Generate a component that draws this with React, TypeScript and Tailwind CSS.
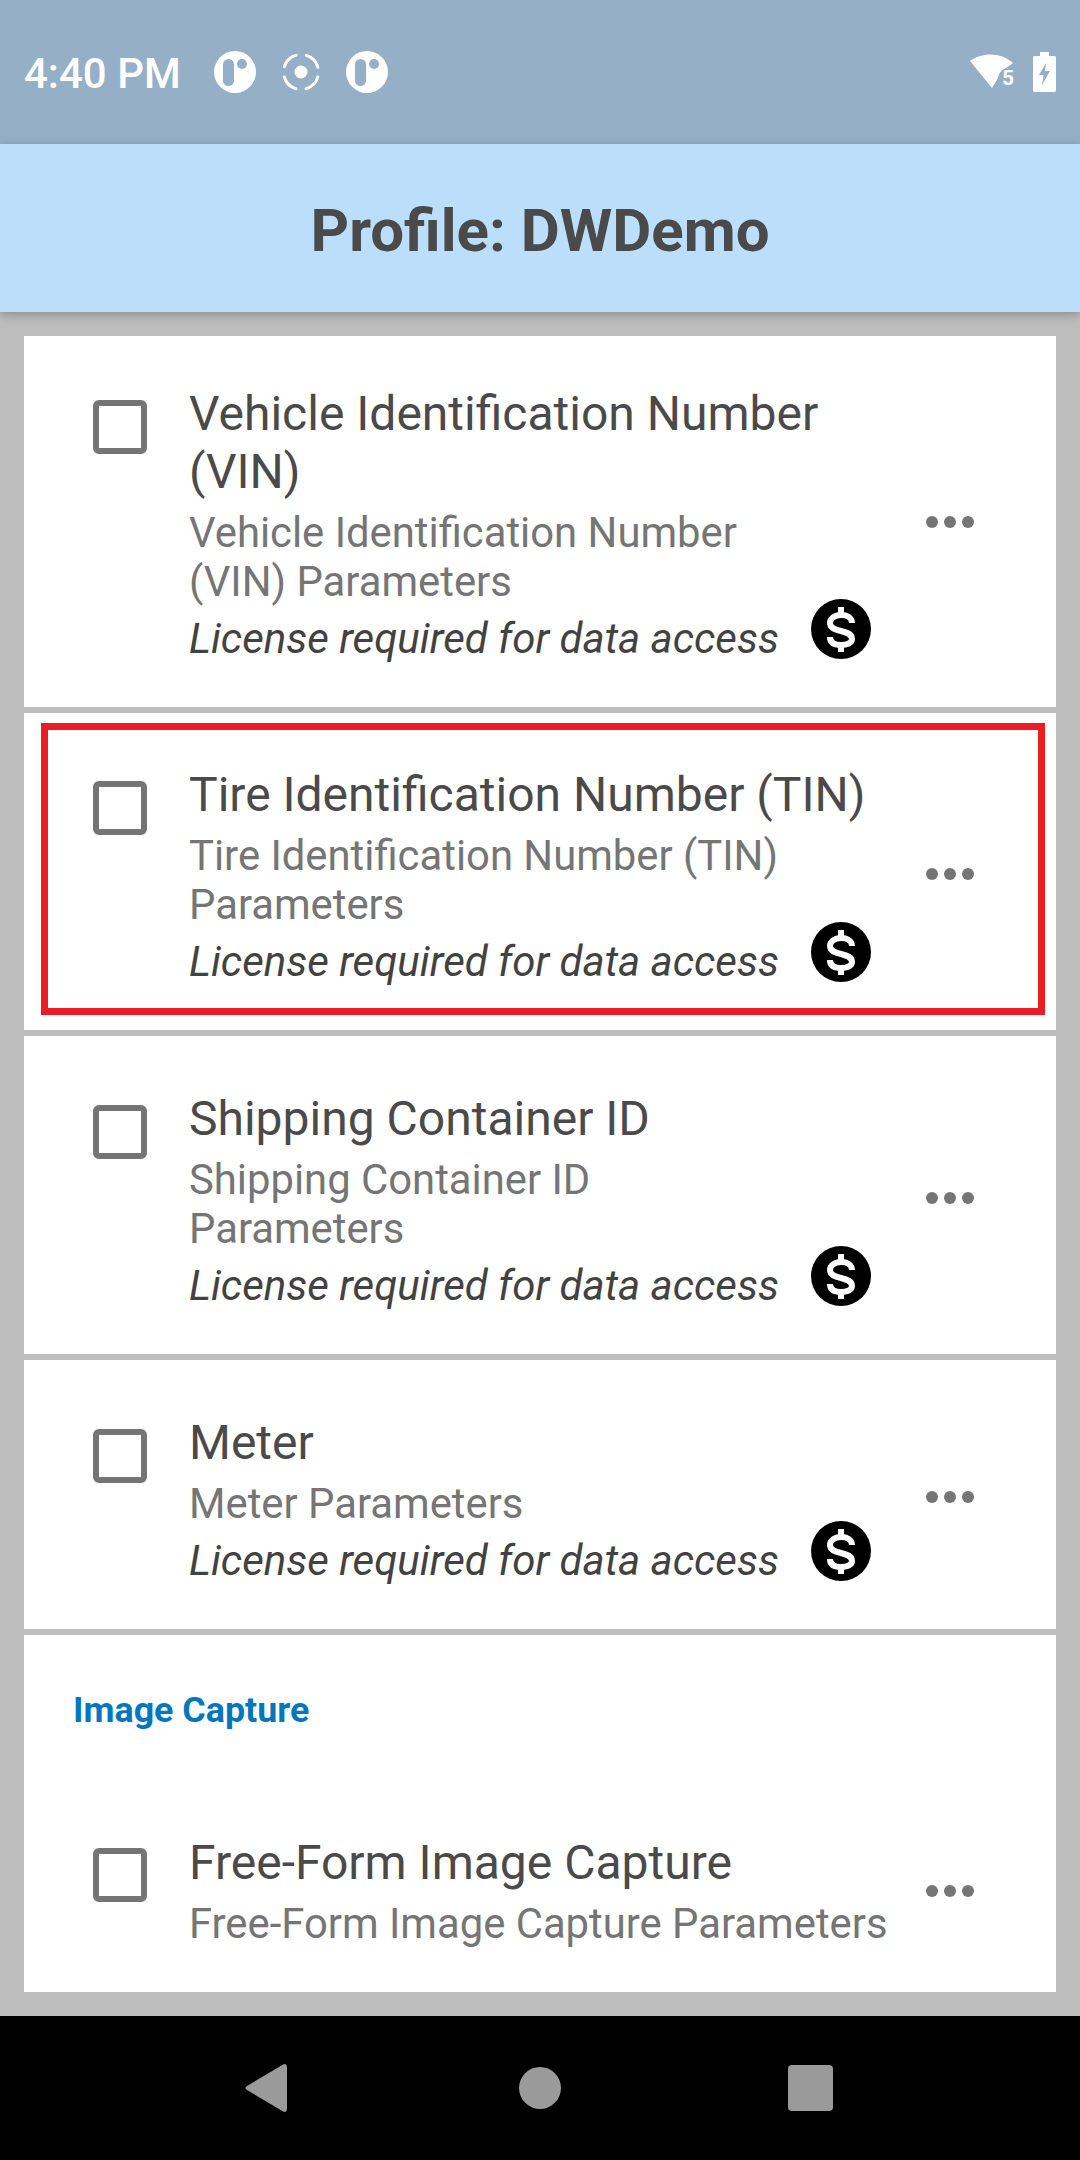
import React from "react";

interface ProfileRow {
  title: string;
  subtitle: string;
  height: string;
  top: string;
  dots: string;
}

const rows: ProfileRow[] = [
  {
    title: "Vehicle Identification Number (VIN)",
    subtitle: "Vehicle Identification Number (VIN) Parameters",
    height: "h-[371px]",
    top: "pt-[49px]",
    dots: "",
  },
  {
    title: "Tire Identification Number (TIN)",
    subtitle: "Tire Identification Number (TIN) Parameters",
    height: "h-[317px]",
    top: "pt-[53px]",
    dots: "pt-[5px]",
  },
  {
    title: "Shipping Container ID",
    subtitle: "Shipping Container ID Parameters",
    height: "h-[318px]",
    top: "pt-[54px]",
    dots: "pt-[5px]",
  },
  {
    title: "Meter",
    subtitle: "Meter Parameters",
    height: "h-[269px]",
    top: "pt-[54px]",
    dots: "pt-[5px]",
  },
];

function Checkbox({ className }: { className: string }) {
  return (
    <div
      className={`h-[54px] w-[54px] shrink-0 rounded-[6px] border-[6px] border-[#757575] ${className}`}
    />
  );
}

function MoreDots() {
  return (
    <svg width="48" height="12" viewBox="0 0 48 12" fill="#757575" className="shrink-0">
      <circle cx="6" cy="6" r="6" />
      <circle cx="24" cy="6" r="6" />
      <circle cx="42" cy="6" r="6" />
    </svg>
  );
}

function DollarBadge() {
  return (
    <svg
      width="60"
      height="60"
      viewBox="0 0 60 60"
      className="ml-[32px] shrink-0 -translate-y-[10px] blur-[0.6px]"
    >
      <circle cx="30" cy="30" r="30" fill="#000" />
      <g fill="none" stroke="#fff" strokeWidth="6">
        <path d="M41 24C41 18.500 36 16 30 16C23.500 16 19 19.500 19 24C19 29 24 30.500 30 32C36 33.500 41 35 41 40C41 44 36 46 30 46C24 46 19 44 19 38" />
        <path d="M30 8V16M30 46V53" />
      </g>
    </svg>
  );
}

function Row({ row }: { row: ProfileRow }) {
  return (
    <div className={`relative flex bg-white pl-[69px] ${row.height} ${row.top}`}>
      <Checkbox className="mt-[15px]" />
      <div className="ml-[42px] w-[700px]">
        <div className="text-[48px] leading-[58px] text-[#4a4a4a]">{row.title}</div>
        <div className="mt-[7px] max-w-[600px] text-[41.8px] leading-[49px] text-[#757575]">
          {row.subtitle}
        </div>
        <div className="mt-[8px] flex h-[49px] items-center text-[42px] italic leading-[49px] text-[#424242]">
          <span>License required for data access</span>
          <DollarBadge />
        </div>
      </div>
      {/* menu dots are centred on the card, not on the text */}
      <div className={`absolute right-[82px] top-0 flex h-full items-center ${row.dots}`}>
        <MoreDots />
      </div>
    </div>
  );
}

function LogoCircle() {
  return (
    <svg width="42" height="42" viewBox="0 0 42 42">
      <circle cx="21" cy="21" r="21" fill="#fff" />
      <rect x="9" y="8" width="11" height="27" rx="5.5" fill="#94afc6" />
      <circle cx="28" cy="13" r="5" fill="#94afc6" />
    </svg>
  );
}

function StatusBar() {
  return (
    <div className="flex h-[144px] items-center bg-[#94afc6] pl-[24px] pr-[24px] text-white">
      <span className="pt-[3px] text-[42px] font-medium leading-none">4:40 PM</span>
      <div className="ml-[33px] flex items-center gap-[26px]">
        <LogoCircle />
        <svg width="38" height="38" viewBox="0 0 38 38" fill="none" stroke="#fff">
          <circle cx="19" cy="19" r="6.5" fill="#fff" stroke="none" />
          <circle cx="19" cy="19" r="17.5" strokeWidth="3" strokeDasharray="17 10.5" strokeDashoffset="-5" strokeLinecap="round" />
        </svg>
        <LogoCircle />
      </div>
      <div className="ml-auto flex items-center gap-[19px]">
        <svg width="44" height="36" viewBox="0 0 44 36" fill="#fff">
          <path d="M0 7C12 -2 31 -2 43 9L36 14C32 15 29 19 28 24L22 34Z" />
          <text x="32" y="31" fontSize="21" fontWeight="700" fontFamily="Roboto, sans-serif">5</text>
        </svg>
        <svg width="23" height="40" viewBox="0 0 23 40" fill="#fff">
          <path fillRule="evenodd" d="M7 0H16V4H21.5Q23 4 23 5.5V38.5Q23 40 21.5 40H1.5Q0 40 0 38.5V5.500Q0 4 1.5 4H7ZM13 11L6 23H10.5L9 33L17 19H12Z" />
        </svg>
      </div>
    </div>
  );
}

function NavBar() {
  return (
    <div className="flex h-[144px] items-center justify-center bg-black pr-[3px]">
      <svg width="42" height="48" viewBox="0 0 42 48" fill="#9a9a9a" className="mr-[232px]">
        <path d="M39 0Q42 0 42 3V45Q42 48 39 48L2 26Q-1 24 2 22Z" />
      </svg>
      <div className="h-[42px] w-[42px] rounded-full bg-[#9a9a9a]" />
      <div className="ml-[227px] h-[46px] w-[45px] rounded-[4px] bg-[#9a9a9a]" />
    </div>
  );
}

export default function App() {
  return (
    <div className="flex h-[2160px] w-[1080px] flex-col overflow-hidden bg-[#bdbdbd] font-['Roboto',sans-serif]">
      <StatusBar />
      <div className="flex h-[168px] items-center justify-center bg-[#bbdefb] pt-[5px] shadow-[0_3px_9px_rgba(0,0,0,0.25)]">
        <h1 className="text-[60px] font-bold leading-none text-[#4a4a4a]">Profile: DWDemo</h1>
      </div>

      <div className="flex flex-1 flex-col gap-[6px] px-[24px] pt-[24px]">
        {rows.map((row) => (
          <Row key={row.title} row={row} />
        ))}

        <div className="relative h-[357px] bg-white">
          <div className="pl-[49px] pt-[54px] text-[35.8px] font-bold leading-[42px] text-[#0277bd]">
            Image Capture
          </div>
          <div className="mt-[103px] flex pl-[69px]">
            <Checkbox className="mt-[14px]" />
            <div className="ml-[42px]">
              <div className="text-[48px] leading-[58px] text-[#4a4a4a]">Free-Form Image Capture</div>
              <div className="mt-[7px] whitespace-nowrap text-[41.8px] leading-[49px] text-[#757575]">
                Free-Form Image Capture Parameters
              </div>
            </div>
          </div>
          <div className="absolute right-[82px] top-[250px]">
            <MoreDots />
          </div>
        </div>
      </div>

      {/* red highlight around the TIN row */}
      <div className="absolute left-[41px] top-[723px] h-[292px] w-[1004px] border-[7px] border-[#ed1c24]" />

      <NavBar />
    </div>
  );
}
